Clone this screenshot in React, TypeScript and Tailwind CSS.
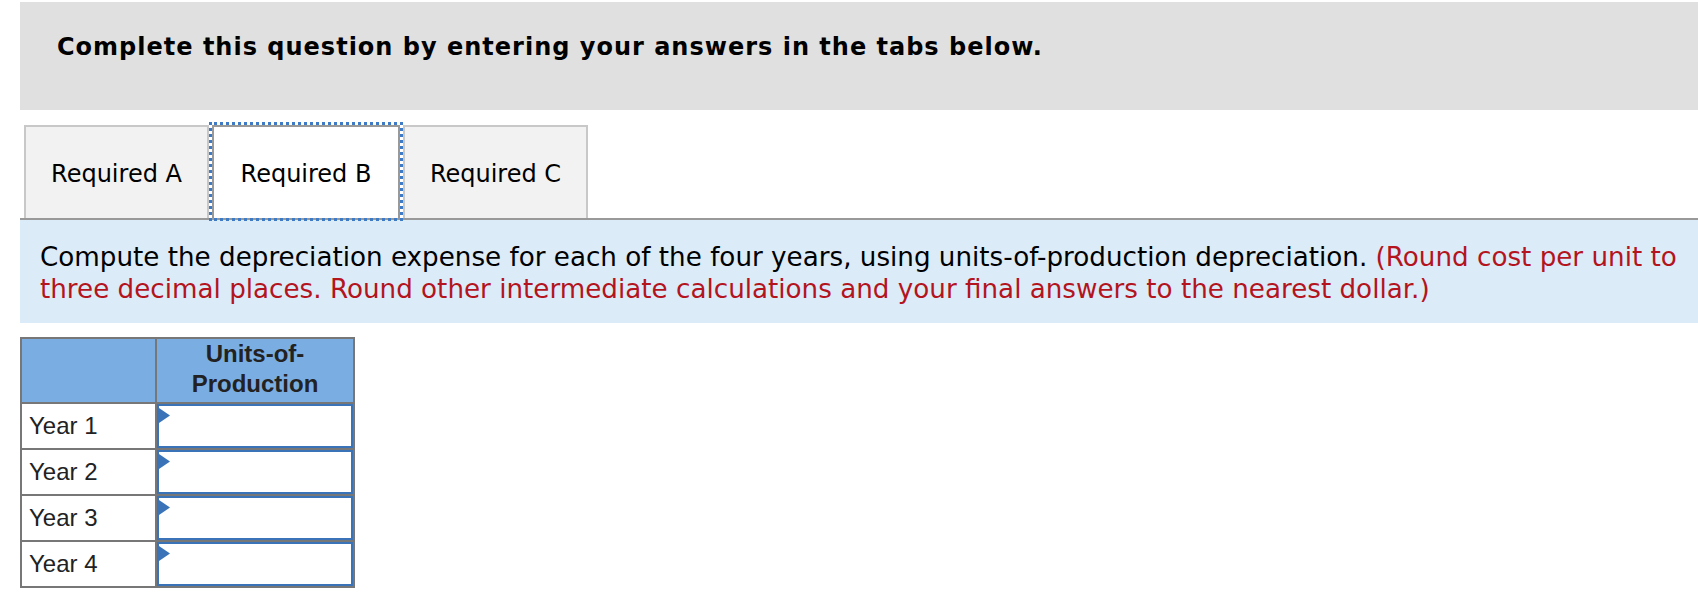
import React from "react";

const Tab = ({ label }: { label: string }) => (
    <div className="h-[93px] w-[185px] border-2 border-b-0 border-[#c8c8c8] bg-[#f2f2f2] pt-[33px] text-center text-[24px] leading-[28px] text-black">
        {label}
    </div>
);

const Triangle = () => (
    <svg className="absolute left-0 top-[2px]" width="11" height="15" viewBox="0 0 11 15">
        <polygon points="0,0 11,7.5 0,15" fill="#3a73b8" />
    </svg>
);

const years = ["Year 1", "Year 2", "Year 3", "Year 4"];

export default function App() {
    return (
        <div className="pl-[20px] pt-[2px] font-['DejaVu_Sans',sans-serif]">
            <div className="h-[108px] bg-[#e0e0e0] pl-[37px] pt-[31px] text-[24px] font-bold leading-[28px] tracking-[1px] text-black">
                Complete this question by entering your answers in the tabs below.
            </div>

            {/* Tabs */}
            <div className="mt-[15px] flex items-start border-b-2 border-[#999] pl-[4px]">
                <Tab label="Required A" />
                <div className="relative z-10 -mb-[3px] -mt-[3px] h-[99px] w-[194px] border-[3px] border-dotted border-[#3d7bc7]">
                    <div className="h-full border-2 border-b-0 border-[#999] bg-white pt-[33px] text-center text-[24px] leading-[28px] text-black">
                        Required B
                    </div>
                </div>
                <Tab label="Required C" />
            </div>

            {/* Instructions */}
            <div className="h-[103px] bg-[#dcebf8] pl-[20px] pt-[21px] text-[26.2px] leading-[32px] text-black">
                <span className="whitespace-nowrap">
                    Compute the depreciation expense for each of the four years, using units-of-production depreciation.{" "}
                    <span className="text-[#b3141d]">(Round cost per unit to</span>
                </span>
                <br />
                <span className="whitespace-nowrap text-[#b3141d]">
                    three decimal places. Round other intermediate calculations and your final answers to the nearest dollar.)
                </span>
            </div>

            {/* Answer table */}
            <div className="mt-[14px] grid w-[335px] grid-cols-[133px_196px] grid-rows-[63px_44px_44px_44px_44px] gap-[2px] bg-[#777] p-[2px] font-['Liberation_Sans',Arial,sans-serif] text-[24px] text-[#222]">
                <div className="bg-[#7aaee3]" />
                <div className="bg-[#7aaee3] text-center font-bold leading-[30px]">
                    Units-of-
                    <br />
                    Production
                </div>
                {years.map((year) => (
                    <React.Fragment key={year}>
                        <div className="flex items-center bg-white pl-[7px]">{year}</div>
                        <div className="relative border-2 border-[#3a73b8] bg-white">
                            <Triangle />
                        </div>
                    </React.Fragment>
                ))}
            </div>
        </div>
    );
}
